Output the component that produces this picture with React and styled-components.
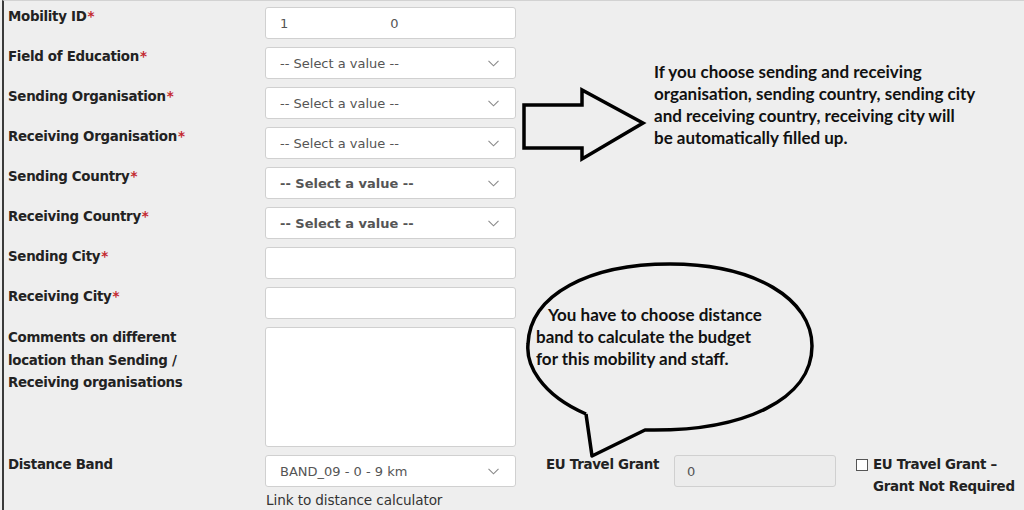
import React from "react";
import styled, { createGlobalStyle } from "styled-components";

const Global = createGlobalStyle`
  html, body { margin: 0; padding: 0; background: #eeeeee; }
  body { font-family: "DejaVu Sans", Verdana, sans-serif; color: #222; }
  * { box-sizing: border-box; }
`;

const Frame = styled.div`
  position: relative;
  width: 1024px;
  height: 510px;
  overflow: hidden;
  border-top: 1px solid #d2d2d2;
  margin-left: 2px;
  border-left: 2px solid #3a3a3a;
  padding: 6px 0 0 4px;
`;

const Form = styled.div`
  display: grid;
  grid-template-columns: 257px 251px;
  row-gap: 8px;
`;

const Label = styled.div`
  font-size: 13.4px;
  font-weight: bold;
  line-height: ${(p) => (p.$multi ? "22.5px" : "20px")};
  letter-spacing: -0.3px;
  color: #222;
  width: ${(p) => (p.$w ? p.$w + "px" : "auto")};
`;

const Req = styled.span`
  color: #c3282e;
  margin-left: 1px;
`;

const Field = styled.div`
  height: ${(p) => p.$h || 32}px;
  background: ${(p) => (p.$disabled ? "#ececec" : "#fff")};
  border: 1px solid #d0d0d0;
  border-radius: 3px;
  display: flex;
  align-items: center;
  padding: 0 16px 0 ${(p) => (p.$pl != null ? p.$pl : 14)}px;
  font-size: 13px;
  color: #555;
  font-weight: ${(p) => (p.$bold ? "bold" : "normal")};
  width: ${(p) => (p.$w ? p.$w + "px" : "auto")};
  flex: none;
`;

const FieldText = styled.span`
  flex: 1;
  white-space: nowrap;
`;

const IdGap = styled.span`
  display: inline-block;
  width: 102px;
`;

const Chevron = () => (
  <svg width="11" height="7" viewBox="0 0 11 7" style={{ flex: "none" }}>
    <path d="M0.5 0.8 L5.5 5.8 L10.5 0.8" fill="none" stroke="#8a8a8a" strokeWidth="1.1" />
  </svg>
);

const Select = ({ value, bold }) => (
  <Field $bold={bold}>
    <FieldText>{value}</FieldText>
    <Chevron />
  </Field>
);

const BottomRow = styled.div`
  display: flex;
  align-items: flex-start;
  margin-top: 8px;
`;

const BandCol = styled.div`
  width: 251px;
  display: flex;
  flex-direction: column;
`;

const LinkText = styled.div`
  font-size: 13.6px;
  color: #333;
  margin-top: 5px;
  padding-left: 1px;
  letter-spacing: -0.1px;
`;

const GrantLabel = styled(Label)`
  width: 158px;
  flex: none;
  padding-left: 30px;
  white-space: nowrap;
`;

const CheckWrap = styled.div`
  display: flex;
  align-items: flex-start;
  margin-left: 20px;
  padding-top: 2px;
`;

const Box = styled.span`
  width: 12px;
  height: 12px;
  border: 1px solid #555;
  background: #fff;
  margin-top: 2px;
  margin-right: 5px;
  flex: none;
`;

const CheckLabel = styled(Label)`
  line-height: 22px;
  margin-top: -3px;
  white-space: nowrap;
`;

const Overlay = styled.div`
  position: absolute;
  left: ${(p) => p.$x}px;
  top: ${(p) => p.$y}px;
  pointer-events: none;
`;

const Note = styled.div`
  font-family: Lato, "Open Sans", sans-serif;
  font-weight: bold;
  font-size: ${(p) => p.$size}px;
  line-height: ${(p) => p.$lh}px;
  color: #111;
  white-space: nowrap;
`;

const Indent = styled.span`
  padding-left: 12px;
`;

export default function App() {
  const rows = [
    ["Mobility ID", "id"],
    ["Field of Education", "sel"],
    ["Sending Organisation", "sel"],
    ["Receiving Organisation", "sel"],
    ["Sending Country", "selb"],
    ["Receiving Country", "selb"],
    ["Sending City", "in"],
    ["Receiving City", "in"],
  ];
  return (
    <>
      <Global />
      <Frame>
        <Form>
          {rows.map(([label, kind]) => (
            <React.Fragment key={label}>
              <Label>
                {label}
                <Req>*</Req>
              </Label>
              {kind === "id" && (
                <Field>
                  <FieldText>
                    1<IdGap />0
                  </FieldText>
                </Field>
              )}
              {kind === "sel" && <Select value="-- Select a value --" />}
              {kind === "selb" && <Select value="-- Select a value --" bold />}
              {kind === "in" && <Field />}
            </React.Fragment>
          ))}
          <Label $multi>
            Comments on different
            <br />
            location than Sending /
            <br />
            Receiving organisations
          </Label>
          <Field $h={120} />
        </Form>
        <BottomRow>
          <Label $w={257}>Distance Band</Label>
          <BandCol>
            <Select value="BAND_09 - 0 - 9 km" />
            <LinkText>Link to distance calculator</LinkText>
          </BandCol>
          <GrantLabel>EU Travel Grant</GrantLabel>
          <Field $disabled $w={162} $pl={12}>
            <FieldText>0</FieldText>
          </Field>
          <CheckWrap>
            <Box />
            <CheckLabel>
              EU Travel Grant –
              <br />
              Grant Not Required
            </CheckLabel>
          </CheckWrap>
        </BottomRow>

        <Overlay $x={516} $y={85}>
          <svg width="130" height="80" viewBox="0 0 130 80">
            <path
              d="M4 19 L62 19 L62 4 L123 37 L62 73 L62 62 L4 62 Z"
              fill="none"
              stroke="#000"
              strokeWidth="3.5"
              strokeLinejoin="miter"
            />
          </svg>
        </Overlay>
        <Overlay $x={650} $y={60}>
          <Note $size={17} $lh={22}>
            If you choose sending and receiving
            <br />
            organisation, sending country, sending city
            <br />
            and receiving country, receiving city will
            <br />
            be automatically filled up.
          </Note>
        </Overlay>
        <Overlay $x={516} $y={253}>
          <svg width="310" height="215" viewBox="0 0 310 215">
            <path
              d="M66 160 C 20 140, 6 110, 8 90 C 10 40, 70 10, 150 10 C 235 10, 292 45, 292 92 C 292 145, 225 178, 125 176 L 72 202 L 66 160"
              fill="none"
              stroke="#000"
              strokeWidth="3.5"
              strokeLinejoin="round"
            />
          </svg>
        </Overlay>
        <Overlay $x={532} $y={303}>
          <Note $size={17} $lh={21.8}>
            <Indent>You have to choose distance</Indent>
            <br />
            band to calculate the budget
            <br />
            for this mobility and staff.
          </Note>
        </Overlay>
      </Frame>
    </>
  );
}
